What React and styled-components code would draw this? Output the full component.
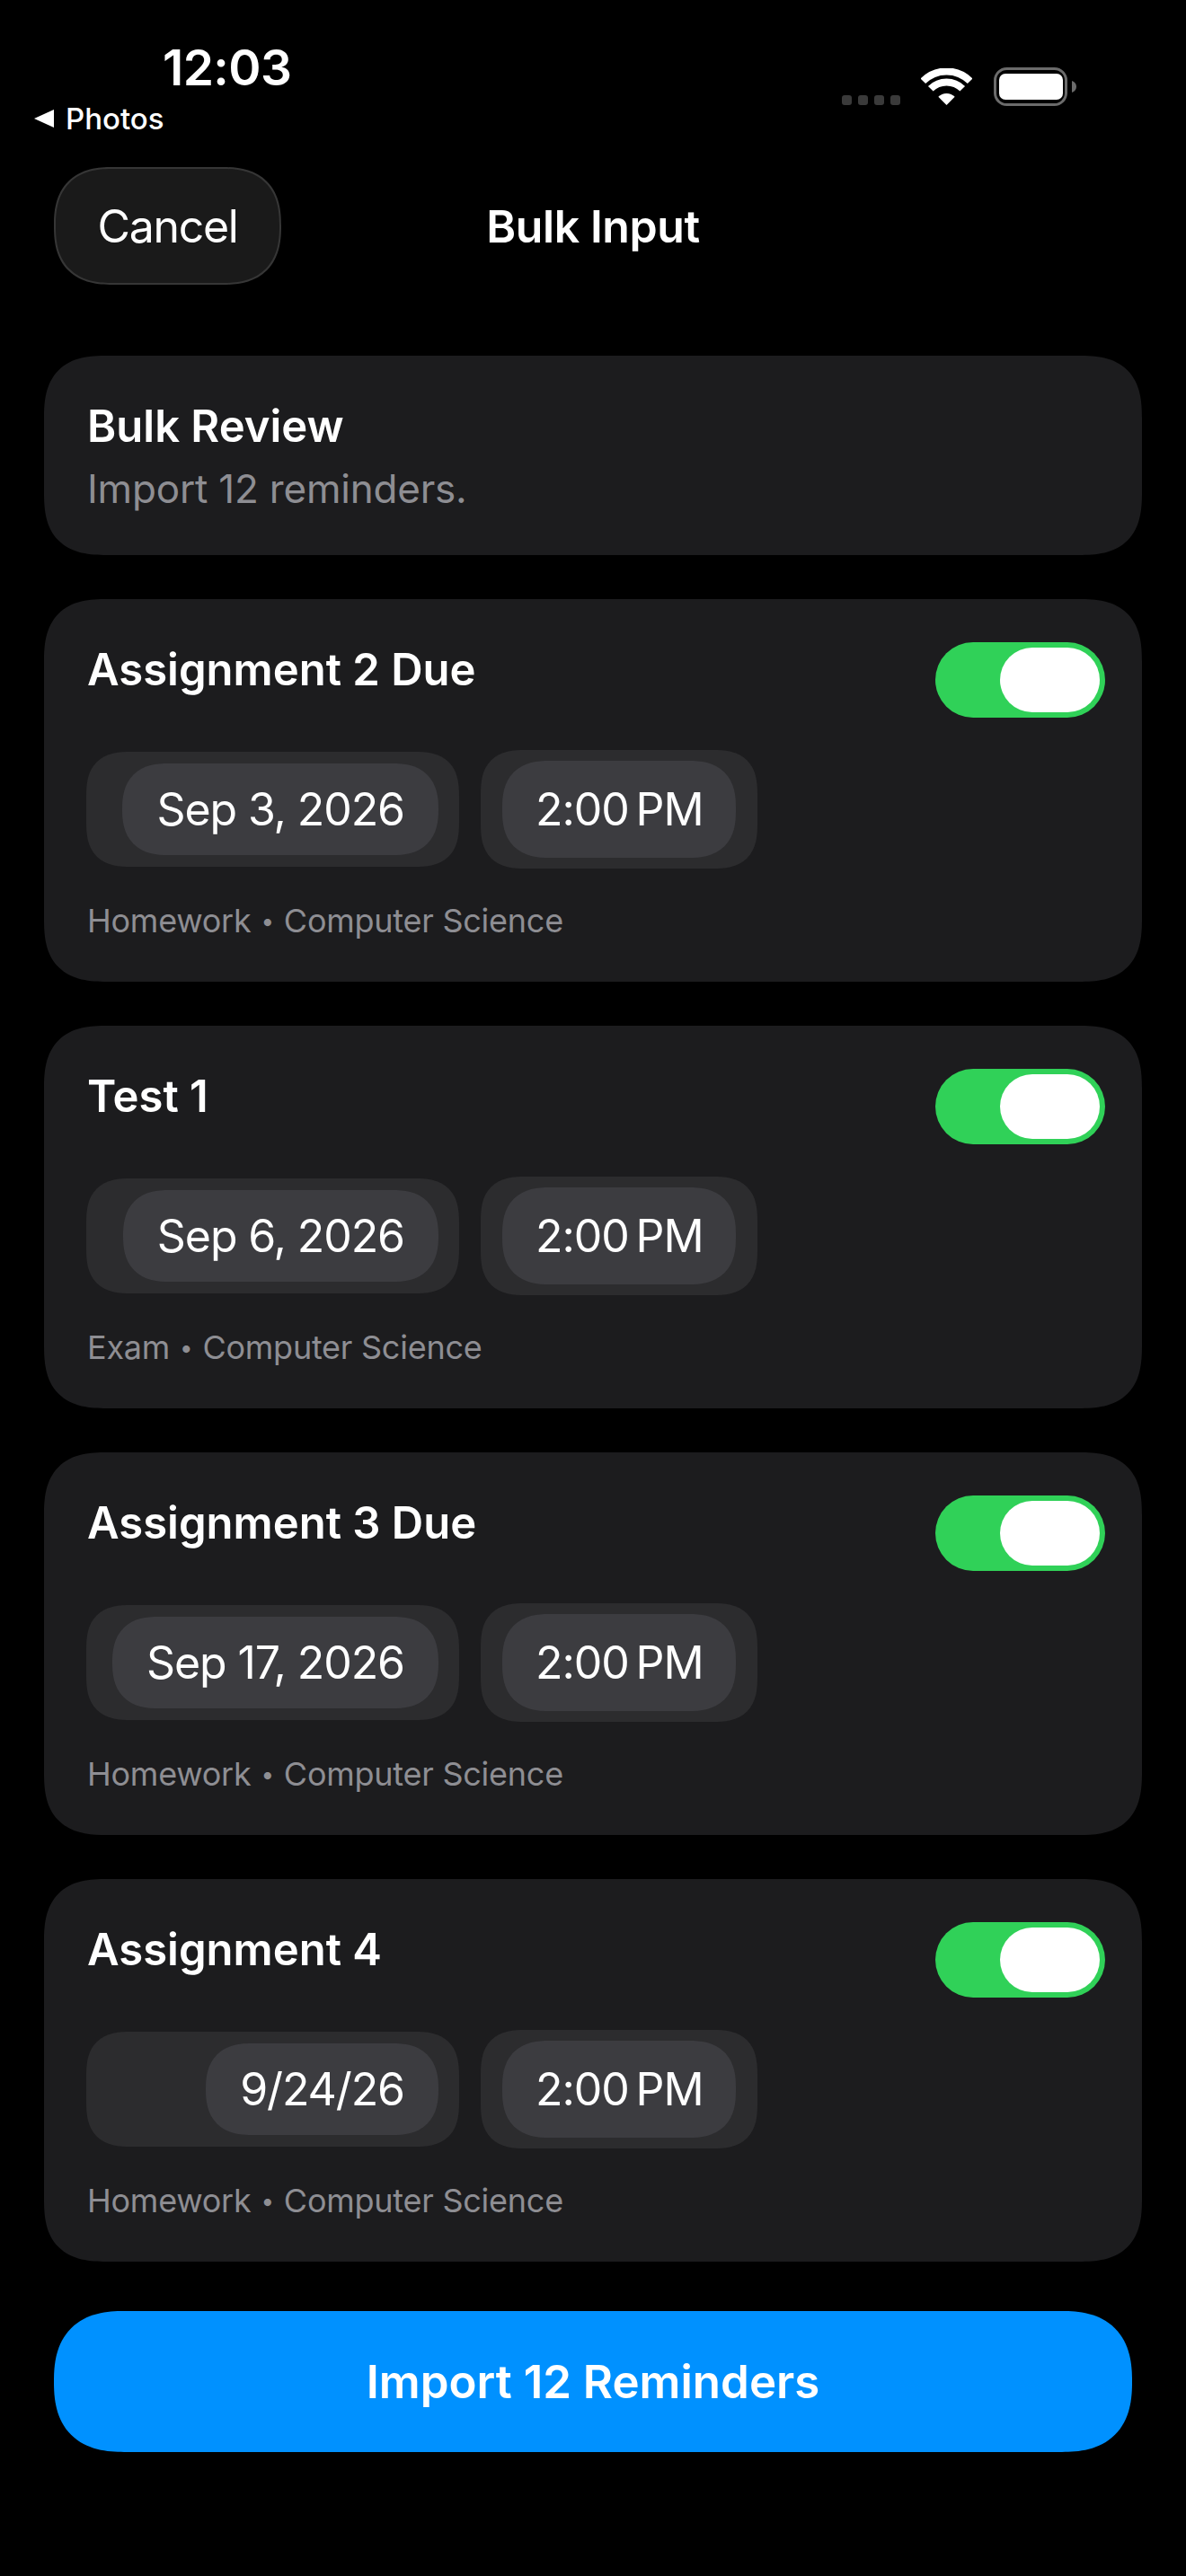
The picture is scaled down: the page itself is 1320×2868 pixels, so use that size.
import React from 'react';
import styled, { createGlobalStyle } from 'styled-components';

const GlobalStyle = createGlobalStyle`
  html, body {
    margin: 0;
    background: #000;
  }
  body {
    font-family: 'Inter', 'Liberation Sans', sans-serif;
    color: #fff;
    -webkit-font-smoothing: antialiased;
  }
`;

const Page = styled.div`
  width: 1320px;
  height: 2868px;
  background: #000;
  overflow: hidden;
`;

const StatusBar = styled.div`
  display: flex;
  justify-content: space-between;
  height: 186px;
`;

const StatusLeft = styled.div`
  display: flex;
  flex-direction: column;
  padding: 42px 0 0 38px;
`;

const Clock = styled.div`
  margin-left: 143px;
  font-size: 55px;
  line-height: 66px;
  font-weight: 600;
  letter-spacing: -0.6px;
`;

const BackLink = styled.div`
  display: flex;
  align-items: center;
  gap: 13px;
  margin-top: 4px;
  font-size: 33px;
  line-height: 40px;
  font-weight: 500;
`;

const StatusIcons = styled.div`
  display: flex;
  align-items: flex-end;
  height: 43px;
  margin: 75px 122px 0 0;
`;

const SignalDots = styled.div`
  display: flex;
  gap: 7px;
  margin: 0 23px 1px 0;
`;

const SignalDot = styled.span`
  width: 11px;
  height: 11px;
  border-radius: 3px;
  background: #3a3a3a;
`;

const Wifi = styled.svg`
  display: block;
  width: 57px;
  height: 41px;
  margin: 0 24px 1px 0;
`;

const Battery = styled.svg`
  display: block;
  width: 92px;
  height: 43px;
`;

const Header = styled.header`
  display: grid;
  grid-template-columns: 1fr auto 1fr;
  align-items: center;
  height: 131px;
  padding: 0 60px;
`;

const CancelButton = styled.button`
  justify-self: start;
  width: 253px;
  height: 131px;
  padding: 0;
  border: 2px solid #363636;
  border-radius: 65px;
  corner-shape: superellipse(1.3);
  background: #1a1a1a;
  color: #fff;
  font: 400 50px 'Inter', sans-serif;
  letter-spacing: -1.3px;
`;

const Title = styled.h1`
  margin: 0;
  font-size: 50px;
  font-weight: 600;
  letter-spacing: -0.4px;
`;

const List = styled.main`
  display: flex;
  flex-direction: column;
  gap: 49px;
  margin-top: 79px;
  padding: 0 49px;
`;

const Card = styled.section`
  padding: ${(p) => p.$padding};
  background: #1c1c1e;
  border-radius: 70px;
  corner-shape: superellipse(1.4);
`;

const SummaryTitle = styled.h2`
  margin: 0;
  font-size: 49px;
  line-height: 62px;
  font-weight: 600;
`;

const SummaryText = styled.p`
  margin: 11px 0 0;
  font-size: 44px;
  line-height: 54px;
  letter-spacing: -0.2px;
  color: #8e8e93;
`;

const CardTop = styled.div`
  display: flex;
  justify-content: space-between;
  align-items: flex-start;
`;

const ItemTitle = styled.h3`
  margin: 0;
  font-size: 49px;
  line-height: 62px;
  font-weight: 600;
`;

const Toggle = styled.div`
  display: flex;
  justify-content: flex-end;
  align-items: center;
  width: 189px;
  height: 84px;
  padding-right: 6px;
  margin-right: -7px;
  box-sizing: border-box;
  border-radius: 42px;
  background: #30d158;
`;

const Knob = styled.span`
  width: 111px;
  height: 72px;
  border-radius: 36px;
  background: #fff;
`;

const Pickers = styled.div`
  display: flex;
  align-items: center;
  gap: 24px;
  margin: 36px 0 0 -1px;
`;

const PickerShell = styled.div`
  display: flex;
  justify-content: flex-end;
  box-sizing: border-box;
  width: ${(p) => p.$width};
  padding: ${(p) => p.$padding};
  background: #2c2c2e;
  border-radius: 50px;
  corner-shape: superellipse(1.4);
`;

const PickerValue = styled.div`
  box-sizing: border-box;
  height: ${(p) => p.$height};
  line-height: ${(p) => p.$height};
  padding: 0 ${(p) => p.$inset};
  background: #3c3c40;
  border-radius: 52px;
  corner-shape: superellipse(1.3);
  font-size: 50px;
  letter-spacing: -1.1px;
  white-space: nowrap;
`;

const Meta = styled.div`
  height: 44px;
  margin-top: 36px;
  font-size: 36px;
  line-height: 44px;
  letter-spacing: -0.25px;
  color: #8e8e93;
`;

const Bullet = styled.span`
  margin: 0 11px;
  font-size: 26px;
  line-height: 1;
  vertical-align: 3px;
`;

const ImportButton = styled.button`
  display: block;
  width: 1200px;
  height: 157px;
  margin: 55px 0 0 60px;
  padding: 0;
  border: 0;
  border-radius: 78px;
  corner-shape: superellipse(1.3);
  background: #0091ff;
  color: #fff;
  font: 600 51px 'Inter', sans-serif;
`;

const reminders = [
  { title: 'Assignment 2 Due', date: 'Sep 3, 2026', kind: 'Homework' },
  { title: 'Test 1', date: 'Sep 6, 2026', kind: 'Exam' },
  { title: 'Assignment 3 Due', date: 'Sep 17, 2026', kind: 'Homework' },
  { title: 'Assignment 4', date: '9/24/26', kind: 'Homework' },
];

const WifiIcon = () => (
  <Wifi viewBox="0 0 57 41">
    <g fill="none" stroke="#fff" strokeWidth="8">
      <path d="M2.3 14.3a37 37 0 0 1 52.4 0" />
      <path d="M10.8 22.8a25 25 0 0 1 35.4 0" />
    </g>
    <path d="M28.5 41l-9.2-9.2a13 13 0 0 1 18.4 0z" fill="#fff" />
  </Wifi>
);

const BatteryIcon = () => (
  <Battery viewBox="0 0 92 43">
    <rect x="1.5" y="1.5" width="79" height="40" rx="13" fill="none" stroke="#6b6b6b" strokeWidth="3" />
    <rect x="6" y="7" width="71" height="29" rx="7" fill="#fff" />
    <path d="M87 15c3 .8 5 3.5 5 6.5s-2 5.7-5 6.5z" fill="#6b6b6b" />
  </Battery>
);

const Reminder = ({ title, date, kind }) => (
  <Card $padding="48px 48px 46px">
    <CardTop>
      <ItemTitle>{title}</ItemTitle>
      <Toggle>
        <Knob />
      </Toggle>
    </CardTop>
    <Pickers>
      <PickerShell $width="415px" $padding="13px 23px">
        <PickerValue $height="102px" $inset="38px">{date}</PickerValue>
      </PickerShell>
      <PickerShell $width="auto" $padding="12px 24px">
        <PickerValue $height="108px" $inset="37px">2:00{'\u202F'}PM</PickerValue>
      </PickerShell>
    </Pickers>
    <Meta>
      {kind}
      <Bullet>•</Bullet>
      Computer Science
    </Meta>
  </Card>
);

export default function App() {
  return (
    <Page>
      <GlobalStyle />
      <StatusBar>
        <StatusLeft>
          <Clock>12:03</Clock>
          <BackLink>
            <svg width="22" height="20" viewBox="0 0 22 20">
              <path d="M22 0v20L0 10z" fill="#fff" />
            </svg>
            Photos
          </BackLink>
        </StatusLeft>
        <StatusIcons>
          <SignalDots>
            <SignalDot />
            <SignalDot />
            <SignalDot />
            <SignalDot />
          </SignalDots>
          <WifiIcon />
          <BatteryIcon />
        </StatusIcons>
      </StatusBar>
      <Header>
        <CancelButton>Cancel</CancelButton>
        <Title>Bulk Input</Title>
      </Header>
      <List>
        <Card $padding="48px 48px 47px">
          <SummaryTitle>Bulk Review</SummaryTitle>
          <SummaryText>Import 12 reminders.</SummaryText>
        </Card>
        {reminders.map((item) => (
          <Reminder key={item.title} {...item} />
        ))}
      </List>
      <ImportButton>Import 12 Reminders</ImportButton>
    </Page>
  );
}
